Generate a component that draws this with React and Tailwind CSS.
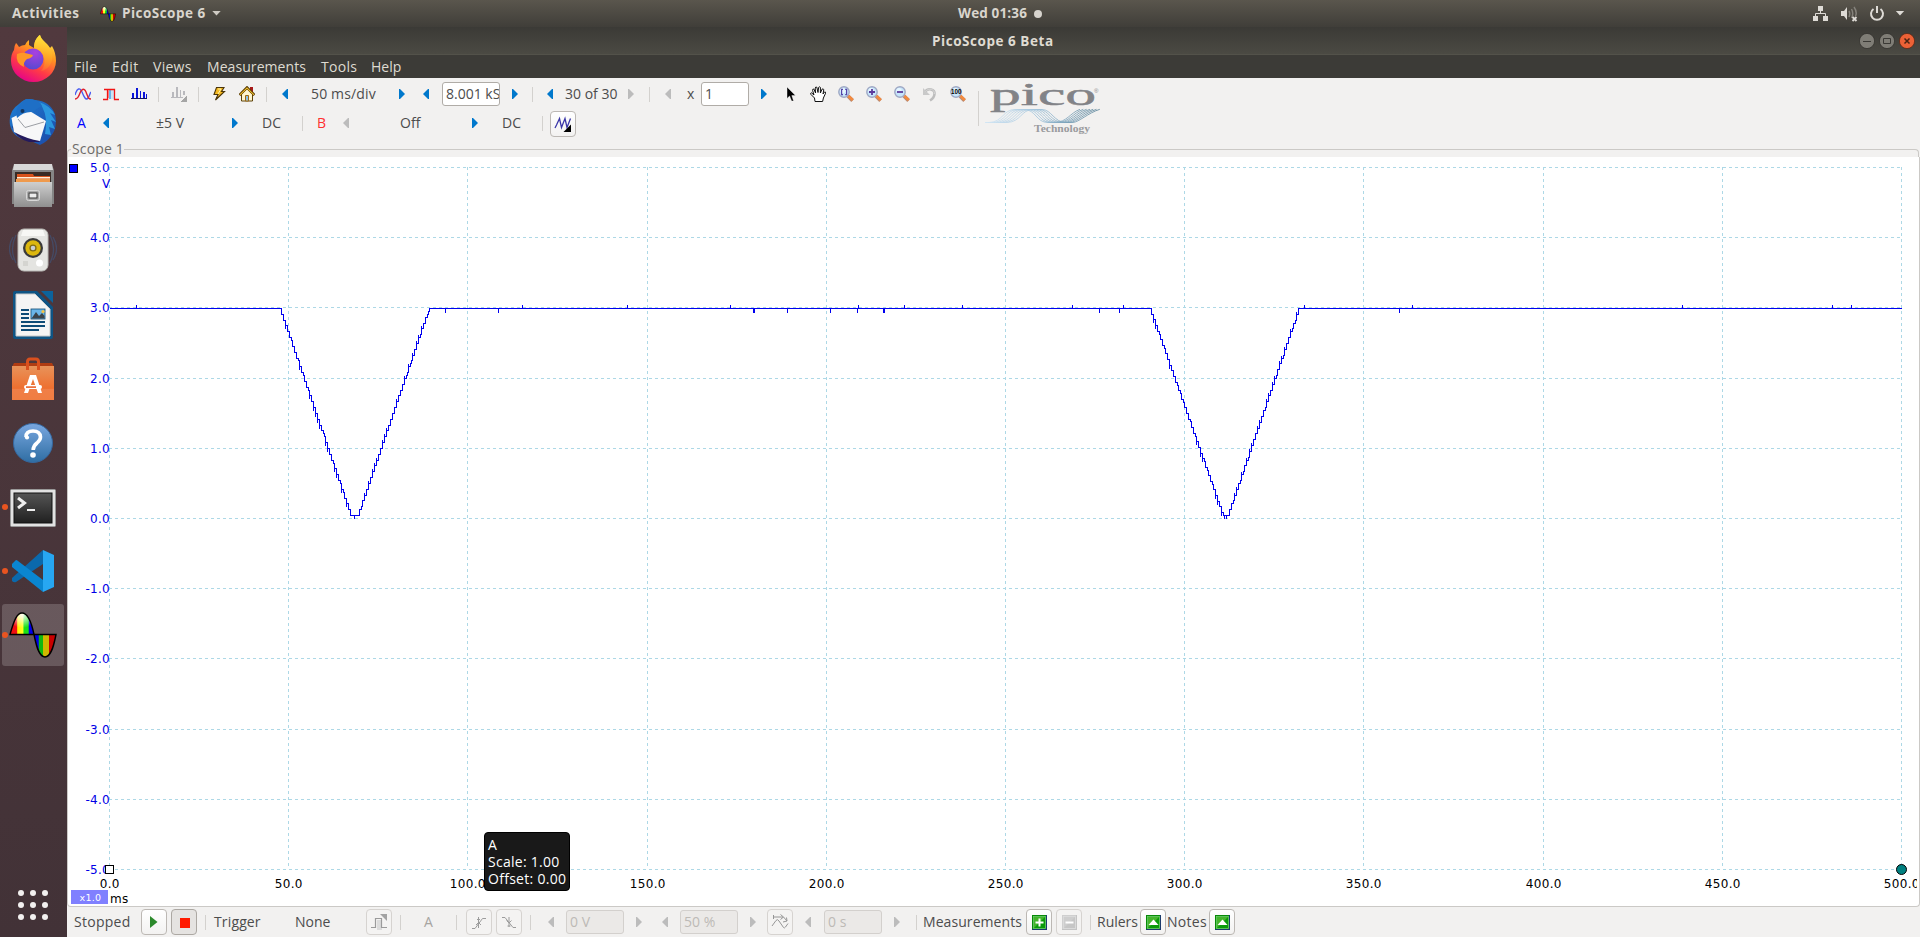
import React from "react";

const UI = "font-['Open_Sans','Noto_Sans',sans-serif]";

/* ---------- small building blocks ---------- */

function Arrow({ dir = "left", off = false, className = "" }) {
  const d = dir === "left" ? "M6 0V10H5L0 5L5 0Z" : "M0 0V10H1L6 5L1 0Z";
  return (
    <svg viewBox="0 0 6 10" className={"h-[10px] w-[6px] shrink-0 " + className}>
      <path d={d} fill={off ? "#bcbcbc" : "#0078cc"} />
    </svg>
  );
}

function Sep({ className = "" }) {
  return <div className={"h-[15px] w-px shrink-0 bg-[#d3d1ce] " + className} />;
}

function Label({ children, className = "" }) {
  return <div className={"shrink-0 whitespace-nowrap text-[14px] leading-5 " + className}>{children}</div>;
}

function Field({ children, off = false, className = "" }) {
  return (
    <div
      className={
        "flex h-6 shrink-0 items-center overflow-hidden whitespace-nowrap rounded-[3px] border pl-[3px] text-[14px] leading-5 " +
        (off ? "border-[#d3d0cd] bg-[#ebe9e7] text-[#bdbab6] " : "border-[#b0aca7] bg-white text-[#4c4c4c] ") +
        className
      }
    >
      {children}
    </div>
  );
}

function Btn({ children, tone = "normal", className = "" }) {
  const t =
    tone === "off"
      ? "border-[#d6d3d0] bg-[#f4f3f2]"
      : tone === "pressed"
      ? "border-[#aca8a3] bg-[#e5e3e1]"
      : "border-[#bcb8b4] bg-linear-to-b from-white to-[#f3f2f1]";
  return (
    <div className={"flex size-[26px] shrink-0 items-center justify-center rounded-[4px] border " + t + " " + className}>
      {children}
    </div>
  );
}

/* ---------- toolbar icons ---------- */

const ic = "size-4 shrink-0 ";

const ScopeIcon = ({ className = "" }) => (
  <svg viewBox="0 0 16 16" fill="none" className={ic + className}>
    <path d="M0 9C2 2 5 1 7 6S11 15 13 12S15 7 16 6" stroke="#4a5cf0" strokeWidth="1.4" />
    <path d="M0 13C3 13 4 10 5 7S9 1 11 6S13 13 16 13" stroke="#e0202c" strokeWidth="1.4" />
  </svg>
);
const PersistIcon = ({ className = "" }) => (
  <svg viewBox="0 0 16 16" fill="none" className={ic + className}>
    <rect x="6" y="3" width="5" height="10" fill="#6cb4e8" />
    <rect x="8" y="3" width="3" height="10" fill="#c9e4f5" />
    <path d="M0 13.5H4.5V3M1 3.5H11.5V13.5H16" stroke="#f01414" strokeWidth="1.3" />
    <path d="M5.5 4V12" stroke="#f77" />
  </svg>
);
const SpectrumIcon = ({ className = "" }) => (
  <svg viewBox="0 0 17 16" className={"h-4 w-[17px] shrink-0 " + className} shapeRendering="crispEdges">
    <path d="M0 12H16V13H0ZM1 7H3V12H1ZM5 2H7V12H5ZM9 5H10V12H9ZM12 6H14V12H12ZM15 8H16V12H15Z" fill="#0a14d8" />
    <path d="M0 12H16V13H0Z" fill="#101060" />
  </svg>
);
const SpectrumOffIcon = ({ className = "" }) => (
  <svg viewBox="0 0 16 16" className={ic + className} shapeRendering="crispEdges">
    <path d="M0 11H12V12H0ZM1 6H3V11H1ZM5 1H7V11H5ZM9 4H10V11H9ZM12 5H14V9H12Z" fill="#b9b9bd" />
    <path d="M16 9V16H9Z" fill="#a5a5a5" />
  </svg>
);
const BoltIcon = ({ className = "" }) => (
  <svg viewBox="0 0 16 16" className={ic + className}>
    <path d="M5.500 1.500H13L10.500 5.500H13.500L4.500 14L7 8.500H3Z" fill="#f5b921" stroke="#4b3509" strokeWidth="1.1" />
    <path d="M7 3H10L7 8" stroke="#fff3a8" fill="none" />
  </svg>
);
const HouseIcon = ({ className = "" }) => (
  <svg viewBox="0 0 16 16" className={ic + className}>
    <path d="M11 1H14V6H11Z" fill="#a81818" />
    <path d="M2.5 8L8 3L13.5 8V15H2.5Z" fill="#fff6cf" stroke="#5c4208" />
    <path d="M0.5 9L8 1.5L15.5 9" fill="none" stroke="#5b3d05" strokeWidth="2.6" />
    <path d="M1 8.8L8 2L15 8.8" fill="none" stroke="#eebe2e" strokeWidth="1.1" />
    <path d="M6.5 9.5H9.5V15H6.5Z" fill="#8cc0e8" stroke="#a06a10" />
  </svg>
);
const CursorIcon = ({ className = "" }) => (
  <svg viewBox="0 0 10 16" className={"h-4 w-[10px] shrink-0 " + className}>
    <path d="M1 1V12.5L3.6 10L5.6 15H7.6L5.8 9.6H9.5Z" fill="#000" stroke="#fff" strokeWidth=".4" />
  </svg>
);
const HandIcon = ({ className = "" }) => (
  <svg viewBox="0 0 16 16" className={ic + className}>
    <path
      d="M5 15.5L4.5 12L1 8.5Q0 7 1.5 6.8L4 9L2.6 4.4Q2.4 2.8 3.8 3L5.6 7L5.2 2Q5.5 .6 6.8 1.2L8 6.5L8.6 1.4Q9.4 .2 10.4 1.4L10.4 7L12 3.2Q13.2 2.4 13.8 3.6L13 8L14.4 6Q16 5.6 15.6 7.2L13.4 12L12.6 15.5Z"
      fill="#fff"
      stroke="#111"
      strokeWidth="1"
      strokeLinejoin="round"
    />
  </svg>
);
function Magnifier({ kind, className = "" }) {
  return (
    <svg viewBox="0 0 16 16" className={ic + "overflow-visible " + className}>
      <path d="M10 10L14.6 14.6" stroke="#b98a72" strokeWidth="3.8" />
      <path d="M9.6 9.2L14.8 14" stroke="#f58a3c" strokeWidth="2.4" />
      <circle cx="6" cy="6" r="5.2" fill="#c6e6fb" stroke="#9fa8c4" strokeWidth="1.4" />
      <circle cx="5" cy="4.6" r="2.6" fill="#e6f6ff" />
      {kind === "plus" && <path d="M6 3V9M3 6H9" stroke="#5b3a9c" strokeWidth="1.8" />}
      {kind === "minus" && <path d="M3 6H9" stroke="#5b3a9c" strokeWidth="1.8" />}
      {kind === "area" && <path d="M5 3.4H3.6V8.6H5M7.2 3.4H8.6V8.6H7.2" stroke="#5544a8" strokeWidth="1.2" fill="none" />}
      {kind === "100" && (
        <text x="1" y="8" textLength="10.4" lengthAdjust="spacingAndGlyphs" className="font-['Liberation_Sans',sans-serif] text-[6.5px] font-bold">
          100
        </text>
      )}
    </svg>
  );
}
const UndoIcon = ({ className = "" }) => (
  <svg viewBox="0 0 16 16" className={ic + className} fill="none">
    <path d="M3 6C6 1.5 13 3 12.5 8C12.3 11 10.5 13 8 14.5" stroke="#bdbdbd" strokeWidth="2.6" />
    <path d="M1 2V9H8Z" fill="#c9c9c9" />
    <path d="M3.5 5.5C6.5 1.5 13 3 12.5 8" stroke="#d6d6d6" />
  </svg>
);
const WaveBtnIcon = () => (
  <svg viewBox="0 0 18 18" className="size-[18px]" fill="none">
    <path d="M1 13L2.500 10L5.500 3.500L7.500 12.500L11 3.500L13 12.500L16.500 3.500" stroke="#3a36a8" strokeWidth="1.3" />
    <path d="M17 9.500V17H9.500Z" fill="#000" />
  </svg>
);

function PicoLogo({ className = "" }) {
  const n = [0, 1, 2, 3, 4, 5, 6];
  return (
    <svg viewBox="985 80 116 56" className={"h-14 w-[116px] shrink-0 overflow-visible " + className}>
      <defs>
        <linearGradient id="wv" gradientUnits="userSpaceOnUse" x1="985" x2="1100" y1="0" y2="0">
          <stop offset="0" stopColor="#d3e6f4" />
          <stop offset=".45" stopColor="#9fc3dc" />
          <stop offset="1" stopColor="#557f95" />
        </linearGradient>
      </defs>
      <text x="990" y="105.3" textLength="106" lengthAdjust="spacingAndGlyphs" fill="#828387" className="font-['Liberation_Serif',serif] text-[32px]" stroke="#828387" strokeWidth=".5">
        pico
      </text>
      <text x="1094" y="92.500" fill="#828387" className="font-['Liberation_Sans',sans-serif] text-[6px]">®</text>
      {n.map((i) => (
        <path
          key={i}
          fill="none"
          stroke="url(#wv)"
          strokeWidth=".8"
          d={`M985 122.5H${989 + i * 3}C${1003 + i * 3} 122 ${1003 + i * 3} 109.5 ${1015 + i * 3} 109.5H${1024 + i * 3}C${1036 + i * 2.6} 109.5 ${1036 + i * 3} 122.5 ${1048 + i * 3} 122.5H${1055 + i * 3}C${1067 + i * 2} 122 ${1070 + i * 3} 113 ${1080 + i * 3.3} 109.3`}
        />
      ))}
      <text x="1034" y="131.5" textLength="56" lengthAdjust="spacingAndGlyphs" fill="#9a9b9e" className="font-['Liberation_Serif',serif] text-[10px] font-bold">
        Technology
      </text>
    </svg>
  );
}

/* ---------- top panel ---------- */

function SineLogo({ id, className = "" }) {
  return (
    <svg viewBox="0 0 48 48" className={className}>
      <defs>
        <linearGradient id={id + "-up"} x1="0" x2="1" y1="0" y2="0">
          <stop offset=".28" stopColor="#f01010" />
          <stop offset=".32" stopColor="#fff200" />
          <stop offset=".54" stopColor="#ffff20" />
          <stop offset=".58" stopColor="#18e018" />
          <stop offset=".76" stopColor="#18e018" />
          <stop offset=".8" stopColor="#0000e8" />
        </linearGradient>
        <linearGradient id={id + "-down"} x1="0" x2="1" y1="0" y2="0">
          <stop offset=".2" stopColor="#0000e8" />
          <stop offset=".22" stopColor="#10b810" />
          <stop offset=".41" stopColor="#10b810" />
          <stop offset=".43" stopColor="#d0b800" />
          <stop offset=".67" stopColor="#d0b800" />
          <stop offset=".69" stopColor="#c80000" />
        </linearGradient>
        <radialGradient id={id + "-shine"} cx=".5" cy=".1" r=".6">
          <stop offset="0" stopColor="#fff" stopOpacity=".95" />
          <stop offset="1" stopColor="#fff" stopOpacity="0" />
        </radialGradient>
      </defs>
      <path d="M1 23.5C5 9 8 2 13 2S22 9 25 23.5Z" fill={"url(#" + id + "-up)"} />
      <path d="M1 23.5C5 9 8 2 13 2S22 9 25 23.5Z" fill={"url(#" + id + "-shine)"} stroke="#000" strokeWidth="1.4" />
      <path d="M25 23.5C28 39 31 46 36 46S44 39 47 23.5Z" fill={"url(#" + id + "-down)"} stroke="#000" strokeWidth="1.4" />
    </svg>
  );
}

function TopBar() {
  return (
    <div className="flex h-[27px] shrink-0 items-center bg-linear-to-b from-[#5a564d] to-[#403e39] text-[13.5px] font-bold text-[#d9d5cd]">
      <div className="w-[68px] shrink-0 pl-3 tracking-[0.035em]">Activities</div>
      <SineLogo id="panel" className="ml-8 size-4 shrink-0" />
      <div className="ml-[6px] w-[84px] shrink-0 whitespace-nowrap tracking-[0.035em]">PicoScope 6</div>
      <svg viewBox="0 0 10 6" className="ml-[6px] h-[5px] w-[9px] shrink-0">
        <path d="M0 0H10L5 5.5Z" fill="#cfcbc4" />
      </svg>
      <div className="ml-[737px] w-[73px] shrink-0 whitespace-nowrap tracking-[0.01em]">Wed 01:36</div>
      <div className="ml-[3px] size-2 shrink-0 rounded-full bg-[#d6d3cd]" />
      <div className="ml-auto flex items-center pr-[15px]">
        <svg viewBox="0 0 16 16" className="size-4">
          <path d="M5 0H10V5H5ZM0 10H5V15H0ZM10 10H15V15H10Z" fill="#dedbd6" />
          <path d="M7.5 5V8M2.5 10V7.5H12.5V10" stroke="#dedbd6" fill="none" />
        </svg>
        <svg viewBox="0 0 17 16" className="ml-3 h-4 w-[17px]" fill="none">
          <path d="M0 5H3L6 1V14L3 10H0Z" fill="#dedbd6" />
          <path d="M8 5Q9.5 7.5 8 11M10.5 3Q13 7.5 10.5 12M13 1Q16.5 6 14.5 10" stroke="#85827b" strokeWidth="1.5" />
          <path d="M11.5 11L15.5 15M15.5 11L11.5 15" stroke="#dedbd6" strokeWidth="1.8" />
        </svg>
        <svg viewBox="0 0 16 16" className="ml-[11px] size-4" fill="none">
          <path d="M4.5 3A6 6 0 1 0 11.5 3" stroke="#dedbd6" strokeWidth="2" />
          <path d="M8 0V7" stroke="#dedbd6" strokeWidth="2" />
        </svg>
        <svg viewBox="0 0 10 6" className="ml-[10px] h-[5px] w-[10px]">
          <path d="M0 0H10L5 5.5Z" fill="#dedbd6" />
        </svg>
      </div>
    </div>
  );
}

/* ---------- launcher ---------- */

function Slot({ children, running = false, active = false }) {
  return (
    <div className="relative flex h-[64.15px] w-[67px] shrink-0 items-center justify-center">
      {active && <div className="absolute left-[2px] top-px h-[62px] w-[62px] rounded-[3px] bg-white/18" />}
      {running && <div className="absolute left-[2px] top-[29px] size-[6px] rounded-full bg-[#e95420]" />}
      <div className="relative mr-px flex">{children}</div>
    </div>
  );
}

function Dock() {
  return (
    <div className="flex w-[67px] shrink-0 flex-col bg-linear-to-b from-[#51393e] to-[#423237]">
      <div className="-mt-px flex flex-col">
        <Slot>
          <svg viewBox="0 0 46 48" className="h-12 w-[46px]">
            <defs>
              <linearGradient id="ff" x1=".8" y1="0" x2=".3" y2="1">
                <stop offset="0" stopColor="#fff44f" />
                <stop offset=".35" stopColor="#ff9a1f" />
                <stop offset=".68" stopColor="#ff3b46" />
                <stop offset="1" stopColor="#e4008c" />
              </linearGradient>
              <radialGradient id="fg" cx=".6" cy=".2" r=".9">
                <stop offset="0" stopColor="#a940e0" />
                <stop offset="1" stopColor="#4e4ad0" />
              </radialGradient>
              <linearGradient id="fo" x1="0" y1="0" x2="0" y2="1">
                <stop offset="0" stopColor="#ffe338" />
                <stop offset="1" stopColor="#ff9420" stopOpacity=".3" />
              </linearGradient>
            </defs>
            <path d="M6 9C7 10 8 11 9 13Q12 11 15 11Q16 8 19 6V11Q22 13 24 14C24 7 27 3 30 1C31 6 37 9 40 14L42 12Q46 19 46 27A22.5 21 0 0 1 1 27Q1 20 4 16Q4 12 6 9Z" fill="url(#ff)" />
            <circle cx="23" cy="25" r="10.5" fill="url(#fg)" />
            <path d="M24 14C24 7 27 3 30 1C31 6 37 9 40 14C46 24 40 36 31 37C37 31 36 17 24 14Z" fill="url(#fo)" />
            <path d="M7 20Q12 18 15 19L23 21Q22 24 17 25Q13 28 14 33Q5 29 7 20Z" fill="#ff9726" />
          </svg>
        </Slot>
        <Slot>
          <svg viewBox="0 0 48 48" className="size-12">
            <defs>
              <linearGradient id="bird" x1="0" x2="1" y1="0" y2="1">
                <stop offset="0" stopColor="#1f7fd4" />
                <stop offset="1" stopColor="#1c4aa8" />
              </linearGradient>
            </defs>
            <path d="M10 6Q17 -1 26 2Q41 3 46 16Q49 30 42 38Q38 44 31 47L22 43Q4 41 1 27Q-1 13 10 6Z" fill="url(#bird)" />
            <path d="M30 4Q42 8 46 17L41 15L47 24L42 22L46 31L40 29L42 37L36 36L37 28Q38 14 30 4Z" fill="#2b97de" />
            <path d="M3 28Q6 40 20 44L31 44L24 38L6 31Z" fill="#241a5e" />
            <path d="M2.500 20L19 12L37 23L31 43Q18 41 5 34Z" fill="#f7f7f8" />
            <path d="M9 21L16 29.500L35 24" fill="none" stroke="#9b9ea4" strokeWidth="1" />
            <path d="M8 20Q5 8 17 1Q31 1 33 8Q28 10 24 14Q15 13 8 20Z" fill="#1e6fc6" />
            <circle cx="13.500" cy="13" r="2" fill="#12345f" />
          </svg>
        </Slot>
        <Slot>
          <svg viewBox="0 0 42 44" className="h-11 w-[42px]">
            <defs>
              <linearGradient id="fl" x1="0" y1="0" x2="0" y2="1">
                <stop offset="0" stopColor="#cfcfcf" />
                <stop offset="1" stopColor="#8f8f8f" />
              </linearGradient>
            </defs>
            <path d="M2 1H40L42 6V40H0V6Z" fill="#858585" />
            <path d="M2 0H40L41 6H1Z" fill="#d8d8d8" />
            <path d="M3 8H39V18H3Z" fill="#3a2b25" />
            <path d="M5 10H21L22 12H38V18H5Z" fill="#d8521c" />
            <path d="M5 13H38V14.5H5Z" fill="#fff1d8" />
            <path d="M4 15H38V18H4Z" fill="#ef9a4d" />
            <path d="M2 18H40V43H2Z" fill="url(#fl)" />
            <rect x="14.5" y="26.500" width="13" height="10" rx="2" fill="#aaa" stroke="#d8d8d8" />
            <rect x="17" y="29" width="8" height="5" fill="#ececec" stroke="#333" />
          </svg>
        </Slot>
        <Slot>
          <svg viewBox="0 0 48 46" className="h-[46px] w-12">
            <g fill="none" stroke="#3e5a85" strokeOpacity=".55" strokeWidth="1.300">
              <path d="M7 8Q0 22 7 36M4 10Q-3 22 4 33M41 8Q48 22 41 36M44 10Q51 22 44 33" />
            </g>
            <rect x="9" y="2" width="30" height="42" rx="6" fill="#e4e4e1" stroke="#b9b9b5" />
            <path d="M14 3H34L36 9H12Z" fill="#f7f7f5" />
            <circle cx="24" cy="21" r="10" fill="#3a3a3a" />
            <circle cx="24" cy="21" r="7.700" fill="#dcb70e" />
            <circle cx="24" cy="21" r="3.600" fill="#7f6a14" />
            <circle cx="24" cy="21" r="2.300" fill="#c9cfd4" />
            <circle cx="30.500" cy="36" r="3.500" fill="#fff" />
            <path d="M14 34H19V39H14Z" fill="#d4d4d0" />
          </svg>
        </Slot>
        <Slot>
          <svg viewBox="0 0 40 48" className="h-12 w-10">
            <path d="M2 0H24L40 16V46Q40 48 38 48H2Q0 48 0 46V2Q0 0 2 0Z" fill="#0e5484" />
            <path d="M28 0H40V12Z" fill="#0c639c" />
            <path d="M3 3H22L37 18V45H3Z" fill="#f4f4f4" stroke="#c9c9c9" />
            <path d="M8 18H16V20H8ZM8 22H16V24H8ZM8 26H16V28H8ZM8 30H32V32H8ZM8 34H32V36H8ZM8 38H26V40H8Z" fill="#0e4b76" />
            <rect x="18" y="18" width="14" height="10" fill="#6ab5e8" stroke="#0e4b76" strokeWidth=".8" />
            <path d="M18.500 27.500L23 21L26 25L29 22L31.500 25V27.500Z" fill="#3b444b" />
            <circle cx="30" cy="20.500" r="1.600" fill="#f3c444" />
          </svg>
        </Slot>
        <Slot>
          <svg viewBox="0 0 42 44" className="h-11 w-[42px]">
            <defs>
              <linearGradient id="sw" x1="0" y1="0" x2="0" y2="1">
                <stop offset="0" stopColor="#e8935a" />
                <stop offset=".66" stopColor="#ee6f2f" />
                <stop offset=".67" stopColor="#f07f47" />
                <stop offset="1" stopColor="#f07d42" />
              </linearGradient>
            </defs>
            <path d="M2 6H40L42 10H0Z" fill="#b03c12" />
            <path d="M0 9H42V43H0Z" fill="url(#sw)" />
            <path d="M15.500 13V5Q15.500 2 18 2H24Q26.500 2 26.500 5V13" fill="none" stroke="#d9501e" strokeWidth="3" />
            <path d="M18 18H24L30 36H26L21 22L16 36H12Z" fill="#fff" />
            <rect x="12" y="28" width="18" height="4" rx="2" fill="#fff" />
            <rect x="14" y="29.300" width="10" height="1.600" fill="#e9632a" />
          </svg>
        </Slot>
        <Slot>
          <svg viewBox="0 0 42 42" className="mt-px size-[42px]">
            <defs>
              <linearGradient id="hp" x1="0" y1="0" x2="0" y2="1">
                <stop offset="0" stopColor="#79a7e0" />
                <stop offset="1" stopColor="#2f6ea3" />
              </linearGradient>
            </defs>
            <circle cx="21" cy="21" r="19.500" fill="url(#hp)" stroke="#3568a0" />
            <path d="M14 15Q14 9 21 9T28.500 15Q28.500 18 25 21Q21.200 24 21.200 28" fill="none" stroke="#fff" strokeWidth="3.600" />
            <circle cx="15" cy="15.500" r="2.100" fill="#fff" />
            <circle cx="21" cy="33" r="2.800" fill="#fff" />
          </svg>
        </Slot>
        <Slot running>
          <svg viewBox="0 0 46 38" className="mt-px h-[38px] w-[46px]">
            <defs>
              <linearGradient id="tm" x1="0" y1="0" x2="0" y2="1">
                <stop offset="0" stopColor="#555" />
                <stop offset="1" stopColor="#202020" />
              </linearGradient>
            </defs>
            <rect x=".5" y=".5" width="45" height="37" rx="1" fill="#e2e2e2" stroke="#999" />
            <rect x="4" y="4" width="38" height="30" fill="url(#tm)" stroke="#111" />
            <path d="M8 9L14.500 14L8 19" fill="none" stroke="#eee" strokeWidth="3" />
            <path d="M17 20H25V22H17Z" fill="#eee" />
          </svg>
        </Slot>
        <Slot running>
          <svg viewBox="0 0 42 42" className="size-[42px]">
            <path d="M0 28L31 0V14L4 32Q2 33 0 31Z" fill="#0b69ac" />
            <path d="M0 14L4 10Q5 10 6 11L31 30V42L0 17Z" fill="#0a86d1" />
            <path d="M31 0L42 5V37L31 42Z" fill="#27a7f2" />
          </svg>
        </Slot>
        <Slot running active>
          <SineLogo id="dock" className="size-12" />
        </Slot>
      </div>
      <div className="mt-auto mb-[17px] ml-[18px] grid w-[30px] grid-cols-3 gap-[6px]">
        {Array.from({ length: 9 }, (_, i) => (
          <div key={i} className="size-[6px] rounded-full bg-[#f2f0ef]" />
        ))}
      </div>
    </div>
  );
}

/* ---------- window chrome ---------- */

function TitleBar() {
  return (
    <div className="flex h-7 shrink-0 items-center border-b border-[#53524a] bg-linear-to-b from-[#3b3a36] to-[#4b4a43]">
      <div className="ml-[865px] mt-px w-[124px] shrink-0 whitespace-nowrap text-[13.5px] font-bold tracking-[0.04em] text-[#dfdbd2]">PicoScope 6 Beta</div>
      <div className="ml-auto flex gap-1 pr-[5px]">
        <svg viewBox="0 0 16 16" className="size-4">
          <circle cx="8" cy="8" r="7.600" fill="#7f7d76" stroke="#33322e" strokeWidth=".8" />
          <path d="M4 8.500H12" stroke="#3a3935" />
        </svg>
        <svg viewBox="0 0 16 16" className="size-4">
          <circle cx="8" cy="8" r="7.600" fill="#7f7d76" stroke="#33322e" strokeWidth=".8" />
          <path d="M4.500 5.500H11.500V10.500H4.500Z" fill="none" stroke="#3a3935" />
        </svg>
        <svg viewBox="0 0 16 16" className="size-4">
          <circle cx="8" cy="8" r="7.600" fill="#ec6136" stroke="#5a2a18" strokeWidth=".8" />
          <path d="M5.500 5.500L10.500 10.500M10.500 5.500L5.500 10.500" stroke="#4a2413" strokeWidth="1.500" />
        </svg>
      </div>
    </div>
  );
}

function MenuBar() {
  return (
    <div className="flex h-[23px] shrink-0 items-center bg-[#3c3b37] text-[14px] text-[#dfdbd2]">
      <div className="ml-[7px] w-[38px] tracking-[0.02em]">File</div>
      <div className="w-[41px] tracking-[0.03em]">Edit</div>
      <div className="w-[54px] tracking-[0.02em]">Views</div>
      <div className="w-[114px] tracking-[0.005em]">Measurements</div>
      <div className="w-[50px] tracking-[0.02em]">Tools</div>
      <div>Help</div>
    </div>
  );
}

function Toolbar() {
  return (
    <div className="flex h-[62px] shrink-0 text-[#4c4c4c]">
      <div className="flex w-[911px] shrink-0 flex-col">
        <div className="flex h-8 items-center">
          <ScopeIcon className="ml-2" />
          <PersistIcon className="ml-3" />
          <SpectrumIcon className="ml-3" />
          <Sep className="ml-[10px]" />
          <SpectrumOffIcon className="ml-3" />
          <Sep className="ml-[11px]" />
          <BoltIcon className="ml-3" />
          <HouseIcon className="ml-3" />
          <Sep className="ml-[11px]" />
          <Arrow className="ml-[15px]" />
          <Label className="ml-[23px] w-[67px] tracking-[0.01em]">50 ms/div</Label>
          <Arrow dir="right" className="ml-[21px]" />
          <Arrow className="ml-[18px]" />
          <Field className="ml-[13px] w-[58px]">8.001 kS/s</Field>
          <Arrow dir="right" className="ml-3" />
          <Sep className="ml-[14px]" />
          <Arrow className="ml-[14px]" />
          <Label className="ml-3 w-[54px]">30 of 30</Label>
          <Arrow dir="right" off className="ml-[9px]" />
          <Sep className="ml-[15px]" />
          <Arrow off className="ml-[15px]" />
          <Label className="ml-4 w-[14px]">x</Label>
          <Field className="w-12">1</Field>
          <Arrow dir="right" className="ml-3" />
          <CursorIcon className="ml-[19px]" />
          <HandIcon className="ml-[14px]" />
          <Magnifier kind="area" className="ml-3" />
          <Magnifier kind="plus" className="ml-3" />
          <Magnifier kind="minus" className="ml-3" />
          <UndoIcon className="ml-3" />
          <Magnifier kind="100" className="ml-3" />
        </div>
        <div className="flex h-[26px] items-center">
          <Label className="ml-[10px] w-[11px] text-[#0000ff]">A</Label>
          <Arrow className="ml-[15px]" />
          <Label className="ml-[47px] w-[30px]">±5 V</Label>
          <Arrow dir="right" className="ml-[46px]" />
          <Label className="ml-[24px] w-[21px]">DC</Label>
          <Sep className="ml-[19px]" />
          <Label className="ml-[14px] w-[11px] text-[#ff3030]">B</Label>
          <Arrow off className="ml-[15px]" />
          <Label className="ml-[51px] w-6">Off</Label>
          <Arrow dir="right" className="ml-[48px]" />
          <Label className="ml-6 w-[21px]">DC</Label>
          <Sep className="ml-[19px]" />
          <Btn className="ml-[7px] mt-[2px]">
            <WaveBtnIcon />
          </Btn>
        </div>
      </div>
      <div className="mt-[13px] h-[35px] w-px shrink-0 bg-[#d3d1ce]" />
      <PicoLogo className="ml-[6px] mt-[2px]" />
    </div>
  );
}

/* ---------- scope view ---------- */

const gridX = [109, 288, 467, 647, 826, 1005, 1184, 1363, 1543, 1722, 1901];
const gridY = [167, 237, 307, 378, 448, 518, 588, 658, 729, 799, 869];
const yLabels = ["5.0", "4.0", "3.0", "2.0", "1.0", "0.0", "-1.0", "-2.0", "-3.0", "-4.0", "-5.0"];
const ticksUp = [136, 522, 627, 730, 858, 904, 962, 1072, 1123, 1304, 1412, 1682, 1832, 1851];
const ticksDown = [445, 498, 753, 754, 787, 830, 857, 883, 884, 1099, 1119, 1399];

/* Stair-stepped edge between two points, with small overshoots like quantisation noise. */
function edge(x0, y0, x1, y1, seed) {
  let s = seed;
  let d = "";
  let x = x0;
  const dir = y1 > y0 ? 1 : -1;
  while (x < x1) {
    s = (s * 1103515245 + 12345) % 2147483648;
    const r = Math.floor(s / 65536) % 10;
    const w = r < 3 ? 1 : 2;
    x = Math.min(x1, x + w);
    const y = Math.round(y0 + ((y1 - y0) * (x - x0)) / (x1 - x0));
    if (r > 6 && x < x1) d += `V${y + dir * 3}V${y}`;
    else d += `V${y}`;
    d += `H${x}`;
  }
  return d + `V${y1}`;
}

const trace =
  "M109 308H281" +
  edge(281, 308, 352, 515, 7) +
  "H354V518V515H359" +
  edge(359, 515, 430, 308, 21) +
  "H1151" +
  edge(1151, 308, 1224, 515, 5) +
  "V518V515H1226V518V515H1229" +
  edge(1229, 515, 1300, 308, 33) +
  "H1901" +
  ticksUp.map((x) => `M${x} 308V304`).join("") +
  ticksDown.map((x) => `M${x} 308V312`).join("");

function Plot() {
  return (
    <svg viewBox="69 157 1848 748" className="h-[748px] w-[1848px] shrink-0 bg-white font-['DejaVu_Sans',sans-serif] text-[12px] tracking-[0.3px]">
      <g stroke="#add8e6" strokeDasharray="3 3" shapeRendering="crispEdges">
        {gridY.map((y) => (
          <path key={y} d={`M109 ${y + 0.5}H1902`} />
        ))}
        {gridX.map((x) => (
          <path key={x} d={`M${x + 0.5} 167V867`} />
        ))}
      </g>
      {gridY.map((y, i) => (
        <text key={y} x="110" y={y + 4.7} textAnchor="end" fill="#0000e6">
          {yLabels[i]}
        </text>
      ))}
      <text x="110.500" y="187.500" textAnchor="end" fill="#0000e6">V</text>
      {gridX.map((x, i) => (
        <text key={x} x={x + 0.8} y="888" textAnchor="middle" fill="#000">
          {(i * 50).toFixed(1)}
        </text>
      ))}
      <text x="110" y="903" fill="#000">ms</text>
      <path d={trace} transform="translate(.5 .5)" fill="none" stroke="#0000f0" shapeRendering="crispEdges" />
      <rect x="69.500" y="164.500" width="8" height="8" fill="#0000ff" stroke="#000" shapeRendering="crispEdges" />
      <rect x="105.500" y="865.500" width="8" height="8" fill="#fff" stroke="#000" shapeRendering="crispEdges" />
      <circle cx="1901.500" cy="869.500" r="5" fill="#008080" stroke="#000" />
      <rect x="71" y="890" width="37" height="14" fill="#8080ff" />
      <text x="79.500" y="900.500" fill="#fff" className="text-[9.5px]">x1.0</text>
    </svg>
  );
}

function ScopeView() {
  return (
    <div className="relative h-[767px] shrink-0">
      <div className="flex h-[17px] items-center text-[#6e6c69]">
        <div className="mt-[9px] h-2 w-1 rounded-tl-[4px] border-l border-t border-[#cbc9c6]" />
        <Label className="ml-px w-[52px] tracking-[0.01em]">Scope 1</Label>
        <div className="mt-[9px] mr-px h-2 flex-1 rounded-tr-[4px] border-r border-t border-[#cbc9c6]" />
      </div>
      <div className="flex h-[750px] rounded-b-[4px] border-x border-b border-[#cbc9c6] bg-white pl-px">
        <Plot />
      </div>
      <div className="absolute left-[417px] top-[692px] h-[59px] w-[86px] rounded-[4px] border border-black bg-[#191919] pl-[3px] pt-[3px] text-[14px] leading-[17px] tracking-[0.02em] text-white">
        <div>A</div>
        <div>Scale: 1.00</div>
        <div className="whitespace-nowrap">Offset: 0.00</div>
      </div>
    </div>
  );
}

/* ---------- bottom toolbar ---------- */

function GreenIcon({ kind, off = false }) {
  return (
    <svg viewBox="0 0 15 15" className="size-[15px]">
      <rect width="15" height="15" fill={off ? "#c4c4c4" : "#1c3a6c"} />
      <rect width="14" height="14" fill={off ? "#cfcfcf" : "#088a08"} />
      <rect x="1.500" y="1.500" width="12" height="12" fill={off ? "#c6c6c6" : "#0a9a0a"} stroke={off ? "#dedede" : "#6fce6f"} strokeWidth=".8" />
      <path d="M2 2H13L2 13Z" fill={off ? "#cecece" : "#45b52c"} />
      {kind === "plus" && <path d="M7.500 3.500V11.500M3.500 7.500H11.500" stroke="#fff" strokeWidth="2" />}
      {kind === "minus" && <path d="M3.500 7.500H11.500" stroke="#fff" strokeWidth="2" />}
      {kind === "up" && <path d="M2.500 10L7.500 4.500L12.500 10Z" fill="#fff" />}
    </svg>
  );
}

function BottomBar() {
  return (
    <div className="flex h-[30px] shrink-0 items-center text-[#4c4c4c]">
      <Label className="ml-[7px] w-[60px] tracking-[0.02em]">Stopped</Label>
      <Btn className="ml-[7px]">
        <svg viewBox="0 0 8 12" className="h-3 w-2">
          <path d="M0 0L7.500 6L0 12Z" fill="#2c8a2c" />
        </svg>
      </Btn>
      <Btn tone="pressed" className="ml-1">
        <div className="ml-[2px] mt-[2px] size-[10px] bg-[#ff1a00]" />
      </Btn>
      <Sep className="ml-2" />
      <Label className="ml-2 w-[81px] tracking-[0.01em]">Trigger</Label>
      <Label className="w-[71px]">None</Label>
      <Btn tone="off">
        <svg viewBox="0 0 16 16" className="size-4" fill="none">
          <path d="M6 6H11V16H6Z" fill="#dcdcdc" />
          <path d="M0 13.500H4.500V4.500H10.500V13.500H16" stroke="#9b9b9b" strokeWidth="1.200" />
          <path d="M9 0H16V7Z" fill="#a3a3a3" />
        </svg>
      </Btn>
      <Sep className="ml-[8px]" />
      <Label className="ml-[23px] w-[11px] text-[#a7a4a1]">A</Label>
      <Sep className="ml-[21px]" />
      <Btn tone="off" className="ml-[9px] border-[#c6c2be]">
        <svg viewBox="0 0 16 16" className="size-4" fill="none">
          <path d="M1 14.500H4L11.500 4.500H15M7.500 3V14M5 11L7.500 8.500L10 11M6 5.500H9" stroke="#9c9c9c" />
        </svg>
      </Btn>
      <Btn tone="off" className="ml-1 border-[#cecac6]">
        <svg viewBox="0 0 16 16" className="size-4" fill="none">
          <path d="M1 3.500H4L12 13.500H15M8 3V13M5.500 6.500L8 9L10.500 6.500M6.500 12H9.500" stroke="#9c9c9c" />
        </svg>
      </Btn>
      <Sep className="ml-2" />
      <Arrow off className="ml-[17px]" />
      <Field off className="ml-3 w-[58px]">0 V</Field>
      <Arrow dir="right" off className="ml-3" />
      <Arrow off className="ml-5" />
      <Field off className="ml-3 w-[58px]">50 %</Field>
      <Arrow dir="right" off className="ml-3" />
      <Btn tone="off" className="ml-[11px] border-[#cecac6]">
        <svg viewBox="0 0 18 16" className="h-4 w-[18px]" fill="none">
          <path d="M1 12L5 6.500Q6.500 4.500 8 7L12.500 13.500Q13.500 14.500 14.500 13L17 9.500M2.500 3H12M2.500 1V5M9.500 .5L12.500 3L9.500 5.500M12.500 3L16 7M12 8L16 7L15.500 3.500" stroke="#969696" />
        </svg>
      </Btn>
      <Arrow off className="ml-3" />
      <Field off className="ml-[13px] w-[58px]">0 s</Field>
      <Arrow dir="right" off className="ml-3" />
      <Sep className="ml-4" />
      <Label className="ml-[6px] w-[103px] tracking-[0.005em]">Measurements</Label>
      <Btn>
        <GreenIcon kind="plus" />
      </Btn>
      <Btn tone="off" className="ml-1">
        <GreenIcon kind="minus" off />
      </Btn>
      <Sep className="ml-2" />
      <Label className="ml-[6px] w-[43px]">Rulers</Label>
      <Btn>
        <GreenIcon kind="up" />
      </Btn>
      <Label className="ml-px w-[42px] tracking-[0.02em]">Notes</Label>
      <Btn>
        <GreenIcon kind="up" />
      </Btn>
    </div>
  );
}

export default function App() {
  return (
    <div className={"flex h-[937px] w-[1920px] flex-col overflow-hidden bg-[#f2f1f0] " + UI}>
      <TopBar />
      <div className="flex flex-1">
        <Dock />
        <div className="flex w-[1853px] flex-col">
          <TitleBar />
          <MenuBar />
          <Toolbar />
          <ScopeView />
          <BottomBar />
        </div>
      </div>
    </div>
  );
}
